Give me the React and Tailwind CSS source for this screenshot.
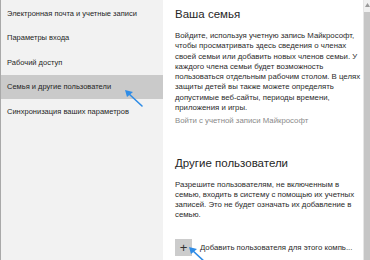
import React from 'react';

const items = [
  'Электронная почта и учетные записи',
  'Параметры входа',
  'Рабочий доступ',
  'Семья и другие пользователи',
  'Синхронизация ваших параметров',
];

function Arrow({ className }) {
  return (
    <svg className={className} width="22" height="22" viewBox="0 0 22 22">
      <line x1="19" y1="19" x2="5" y2="6" stroke="#2f8ce6" strokeWidth="1.6" strokeLinecap="round" />
      <polygon points="2,3 10,5 4,10" fill="#2f8ce6" />
    </svg>
  );
}

export default function App() {
  return (
    <div className="flex w-[370px] h-[260px] overflow-hidden bg-white text-[#1f1f1f]" style={{ fontFamily: '"Liberation Sans", Arial, sans-serif' }}>
      <div className="relative w-[163px] shrink-0 bg-[#f2f2f2] border-l border-[#a9a9a9] pt-[1px]">
        {items.map((t, i) => (
          <div key={t} className={`h-[24.5px] flex items-center pl-[6px] text-[7.5px] whitespace-nowrap ${i === 3 ? 'bg-[#cacaca]' : ''}`}>
            {t}
          </div>
        ))}
        <Arrow className="absolute left-[122px] top-[87px]" />
      </div>

      <div className="relative flex-1 pl-[12px] pt-[5px]">
        <div className="text-[11.5px] leading-[18px] text-[#262626]">Ваша семья</div>
        <p className="mt-[8px] text-[7.8px] leading-[10.3px] text-[#2b2b2b] whitespace-nowrap">
          Войдите, используя учетную запись Майкрософт,<br />
          чтобы просматривать здесь сведения о членах<br />
          своей семьи или добавить новых членов семьи. У<br />
          каждого члена семьи будет возможность<br />
          пользоваться отдельным рабочим столом. В целях<br />
          защиты детей вы также можете определять<br />
          допустимые веб-сайты, периоды времени,<br />
          приложения и игры.
        </p>
        <div className="mt-[3px] text-[7.8px] leading-[10px] text-[#8a8a8a]">Войти с учетной записи Майкрософт</div>

        <div className="mt-[28px] text-[11.5px] leading-[18px] text-[#262626]">Другие пользователи</div>
        <p className="mt-[8px] text-[7.8px] leading-[10px] text-[#2b2b2b] whitespace-nowrap">
          Разрешите пользователям, не включенным в<br />
          семью, входить в систему с помощью их учетных<br />
          записей. Это не будет означать их добавление в<br />
          семью.
        </p>
        <div className="mt-[19px] flex items-center gap-[8px]">
          <div className="w-[17px] h-[17px] bg-[#cccccc] flex items-center justify-center text-[13px] leading-none text-[#333]">+</div>
          <div className="text-[7.8px] text-[#2b2b2b] whitespace-nowrap">Добавить пользователя для этого компь...</div>
        </div>
        <Arrow className="absolute left-[24px] top-[244px]" />
      </div>

      <div className="w-[7px] shrink-0 bg-[#f0f0f0] border-l border-[#e6e6e6]">
        <div className="h-[12px] flex items-start justify-center pt-[3px]">
          <svg width="5" height="4" viewBox="0 0 5 4">
            <polygon points="2.5,0 5,4 0,4" fill="#9a9a9a" />
          </svg>
        </div>
        <div className="h-[248px] bg-[#c6c6c6]" />
      </div>
    </div>
  );
}
